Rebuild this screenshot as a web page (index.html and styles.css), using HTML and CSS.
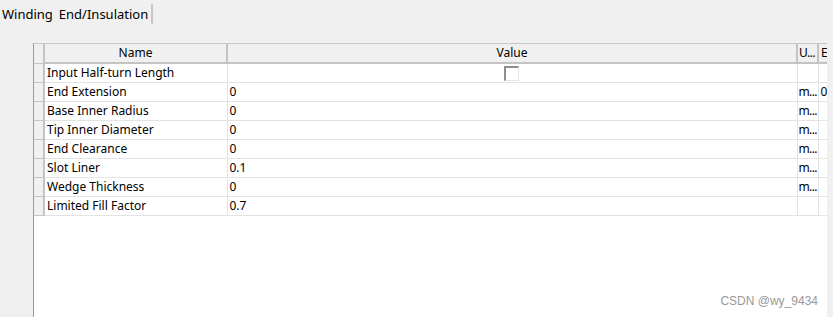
FILE: index.html
```html
<!DOCTYPE html>
<html lang="en">
<head>
  <meta charset="UTF-8">
  <title>End/Insulation</title>
  <link rel="stylesheet" href="styles.css">
</head>
<body>

  <div class="tabs">
    <span class="tab">Winding</span>
    <span class="tab active">End/Insulation</span>
  </div>

  <div class="grid-box">
    <table class="grid">
      <colgroup>
        <col class="c-sel">
        <col class="c-name">
        <col class="c-value">
        <col class="c-unit">
        <col class="c-extra">
      </colgroup>
      <thead>
        <tr>
          <th class="sel"></th>
          <th>Name</th>
          <th>Value</th>
          <th class="left unit">U...</th>
          <th class="left">E</th>
        </tr>
      </thead>
      <tbody>
        <tr>
          <td class="sel"></td>
          <td>Input Half-turn Length</td>
          <td class="center"><span class="check"></span></td>
          <td></td>
          <td></td>
        </tr>
        <tr>
          <td class="sel"></td>
          <td>End Extension</td>
          <td>0</td>
          <td class="unit">m...</td>
          <td>0</td>
        </tr>
        <tr>
          <td class="sel"></td>
          <td>Base Inner Radius</td>
          <td>0</td>
          <td class="unit">m...</td>
          <td></td>
        </tr>
        <tr>
          <td class="sel"></td>
          <td>Tip Inner Diameter</td>
          <td>0</td>
          <td class="unit">m...</td>
          <td></td>
        </tr>
        <tr>
          <td class="sel"></td>
          <td>End Clearance</td>
          <td>0</td>
          <td class="unit">m...</td>
          <td></td>
        </tr>
        <tr>
          <td class="sel"></td>
          <td>Slot Liner</td>
          <td>0.1</td>
          <td class="unit">m...</td>
          <td></td>
        </tr>
        <tr>
          <td class="sel"></td>
          <td>Wedge Thickness</td>
          <td>0</td>
          <td class="unit">m...</td>
          <td></td>
        </tr>
        <tr>
          <td class="sel"></td>
          <td>Limited Fill Factor</td>
          <td>0.7</td>
          <td></td>
          <td></td>
        </tr>
      </tbody>
    </table>
    <div class="watermark">CSDN @wy_9434</div>
  </div>

</body>
</html>
```

FILE: styles.css
```css
html, body {
  margin: 0;
  height: 100%;
}

body {
  font-family: "Noto Sans", "Open Sans", sans-serif;
  font-size: 12px;
  color: #000;
  background-color: #f0f0f0;
  overflow: hidden;
}

.tabs {
  display: flex;
  height: 43px;
  padding-left: 2px;
}

.tab {
  height: 20px;
  line-height: 20px;
  margin-top: 4px;
  font-size: 13px;
  padding-right: 6px;
}

.tab.active {
  border-right: 2px solid #c8c8c8;
  padding-right: 3px;
}

.grid-box {
  position: relative;
  margin-left: 33px;
  width: 793px;
  height: 274px;
  background-color: #fff;
  border-left: 1px solid #9a9a9a;
  border-top: 1px solid #c8c8c8;
  overflow: hidden;
}

.grid {
  border-collapse: collapse;
  table-layout: fixed;
  width: 800px;
}

.c-sel { width: 10px; }
.c-name { width: 183px; }
.c-value { width: 570px; }
.c-unit { width: 21px; }
.c-extra { width: 16px; }

th, td {
  height: 18px;
  padding: 0 0 0 2px;
  white-space: nowrap;
  overflow: hidden;
  text-align: left;
  font-weight: normal;
  line-height: 18px;
}

th {
  background-color: #f0f0f0;
  text-align: center;
  border-right: 2px solid #c4c4c4;
  border-bottom: 2px solid #c4c4c4;
  padding: 0;
}

th.left {
  text-align: left;
  padding-left: 2px;
}

td {
  border-right: 1px solid #e3e3e3;
  border-bottom: 1px solid #e3e3e3;
}

th.unit, td.unit {
  padding-left: 1px;
  letter-spacing: -0.6px;
}

.sel {
  background-color: #f0f0f0;
  border-right: 2px solid #c4c4c4;
  border-bottom: 1px solid #c4c4c4;
  padding: 0;
}

td.center {
  text-align: center;
  padding: 0 2px 0 0;
}

.check {
  display: inline-block;
  width: 12px;
  height: 12px;
  vertical-align: middle;
  border-top: 2px solid #8e8e8e;
  border-left: 2px solid #8e8e8e;
  border-right: 1px solid #e6e6e6;
  border-bottom: 1px solid #e6e6e6;
  margin-top: -1px;
}

.watermark {
  position: absolute;
  right: 9px;
  bottom: 10px;
  font-family: "Liberation Sans", sans-serif;
  font-size: 12px;
  color: #999;
}
```
